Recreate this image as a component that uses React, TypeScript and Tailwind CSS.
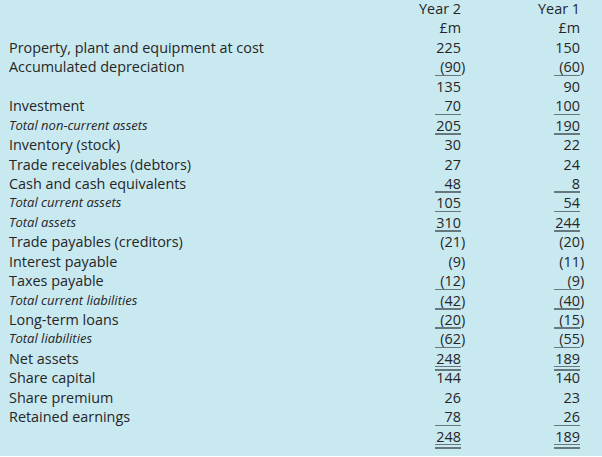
import React from "react";

type Row = {
  label: string;
  italic?: boolean;
  y2: string;
  y1: string;
  u2?: 0 | 1 | 2;
  u1?: 0 | 1 | 2;
};

const rows: Row[] = [
  { label: "", y2: "Year 2", y1: "Year 1" },
  { label: "", y2: "£m", y1: "£m" },
  { label: "Property, plant and equipment at cost", y2: "225", y1: "150" },
  { label: "Accumulated depreciation", y2: "(90)", y1: "(60)", u2: 1, u1: 1 },
  { label: "", y2: "135", y1: "90" },
  { label: "Investment", y2: "70", y1: "100", u2: 1, u1: 1 },
  { label: "Total non-current assets", italic: true, y2: "205", y1: "190", u2: 1, u1: 1 },
  { label: "Inventory (stock)", y2: "30", y1: "22" },
  { label: "Trade receivables (debtors)", y2: "27", y1: "24" },
  { label: "Cash and cash equivalents", y2: "48", y1: "8", u2: 1, u1: 1 },
  { label: "Total current assets", italic: true, y2: "105", y1: "54", u2: 1, u1: 1 },
  { label: "Total assets", italic: true, y2: "310", y1: "244", u2: 1, u1: 1 },
  { label: "Trade payables (creditors)", y2: "(21)", y1: "(20)" },
  { label: "Interest payable", y2: "(9)", y1: "(11)" },
  { label: "Taxes payable", y2: "(12)", y1: "(9)", u2: 1, u1: 1 },
  { label: "Total current liabilities", italic: true, y2: "(42)", y1: "(40)", u2: 1, u1: 1 },
  { label: "Long-term loans", y2: "(20)", y1: "(15)", u2: 1, u1: 1 },
  { label: "Total liabilities", italic: true, y2: "(62)", y1: "(55)", u2: 1, u1: 1 },
  { label: "Net assets", y2: "248", y1: "189", u2: 2, u1: 2 },
  { label: "Share capital", y2: "144", y1: "140" },
  { label: "Share premium", y2: "26", y1: "23" },
  { label: "Retained earnings", y2: "78", y1: "26", u2: 1, u1: 1 },
  { label: "", y2: "248", y1: "189", u2: 2, u1: 2 },
];

function Cell({ v, u, w }: { v: string; u?: 0 | 1 | 2; w: string }) {
  const neg = v.endsWith(")");
  const main = neg ? v.slice(0, -1) : v;
  return (
    <div className={`relative ${w} h-full text-right whitespace-nowrap`}>
      {main}
      {neg && <span className="inline-block w-0">)</span>}
      {u === 1 && (
        <div className="absolute right-0 bottom-[0.5px] w-[26px] h-[1.5px] bg-[#66787e]" />
      )}
      {u === 2 && (
        <>
          <div className="absolute right-0 bottom-[1px] w-[26px] h-[1.5px] bg-[#66787e]" />
          <div className="absolute right-0 bottom-[-2.5px] w-[26px] h-[1.5px] bg-[#66787e]" />
        </>
      )}
    </div>
  );
}

export default function App() {
  return (
    <div
      className="w-[602px] h-[457px] bg-[#c9e9f1] text-[#262626] overflow-hidden -mt-[1px] pt-0"
      style={{ fontFamily: "'Open Sans', Lato, sans-serif" }}
    >
      <div className="flex flex-col">
        {rows.map((r, i) => (
          <div key={i} className="flex h-[19.45px] items-stretch text-[14.4px] leading-[19.45px]">
            <div
              className={`flex-1 pl-[9px] whitespace-nowrap ${
                r.italic ? "italic text-[13px]" : ""
              }`}
            >
              {r.label}
            </div>
            <Cell v={r.y2} u={r.u2} w="w-[80px]" />
            <Cell v={r.y1} u={r.u1} w="w-[119px]" />
            <div className="w-[22px]" />
          </div>
        ))}
      </div>
    </div>
  );
}
